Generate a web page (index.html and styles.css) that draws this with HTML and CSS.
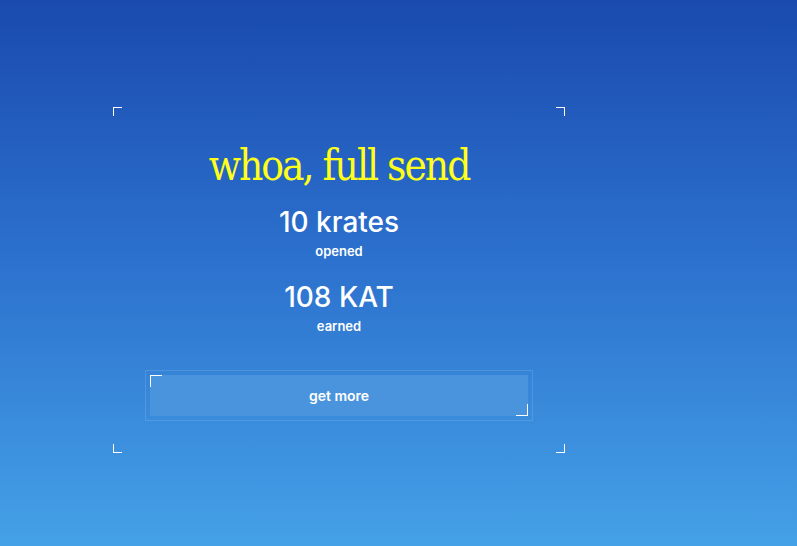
FILE: index.html
```html
<!DOCTYPE html>
<html lang="en">
<head>
  <meta charset="UTF-8">
  <meta name="viewport" content="width=device-width, initial-scale=1.0">
  <title>Krates opened</title>
  <link rel="stylesheet" href="styles.css">
</head>
<body>
  <div class="page">
    <div class="card">
      <span class="corner tl"></span>
      <span class="corner tr"></span>
      <span class="corner bl"></span>
      <span class="corner br"></span>

      <h1 class="title">whoa, full send</h1>

      <div class="stat">
        <div class="stat-value">10 krates</div>
        <div class="stat-label">opened</div>
      </div>
      <div class="stat">
        <div class="stat-value">108 KAT</div>
        <div class="stat-label">earned</div>
      </div>

      <div class="btn-frame">
        <button class="btn">
          <span class="btn-corner tl"></span>
          <span class="btn-corner br"></span>
          get more
        </button>
      </div>
    </div>
  </div>
</body>
</html>
```

FILE: styles.css
```css
html, body {
  margin: 0;
  padding: 0;
  height: 100%;
}

body {
  font-family: Inter, "Noto Sans", sans-serif;
  background: linear-gradient(to bottom, #1a4aae 0%, #2d73cf 50%, #45a1e7 100%);
  color: #fff;
}

.page {
  padding: 107px 0 0 113px;
}

.card {
  position: relative;
  width: 452px;
  height: 346px;
  box-sizing: border-box;
  padding: 31px 32px 0;
  display: flex;
  flex-direction: column;
  align-items: center;
}

.corner {
  position: absolute;
  width: 8px;
  height: 8px;
  border-color: #fff;
  border-style: solid;
  border-width: 0;
}

.corner.tl { top: 0; left: 0; border-top-width: 1px; border-left-width: 1px; }
.corner.tr { top: 0; right: 0; border-top-width: 1px; border-right-width: 1px; }
.corner.bl { bottom: 0; left: 0; border-bottom-width: 1px; border-left-width: 1px; }
.corner.br { bottom: 0; right: 0; border-bottom-width: 1px; border-right-width: 1px; }

.title {
  margin: 0;
  font-family: "DejaVu Serif", serif;
  font-stretch: condensed;
  font-weight: normal;
  font-size: 42px;
  line-height: 56px;
  color: #ffff1a;
  letter-spacing: -2px;
}

.stat {
  display: flex;
  flex-direction: column;
  align-items: center;
  margin-top: 11px;
}

.stat + .stat {
  margin-top: 19px;
}

.stat-value {
  font-size: 28px;
  font-weight: 500;
  line-height: 34px;
}

.stat-label {
  margin-top: 2px;
  font-size: 13px;
  font-weight: 600;
  line-height: 20px;
}

.btn-frame {
  margin-top: 34px;
  width: 388px;
  box-sizing: border-box;
  padding: 4px;
  border: 1px solid rgba(255, 255, 255, 0.12);
}

.btn {
  position: relative;
  display: block;
  width: 100%;
  height: 41px;
  border: 0;
  background-color: #4a93dd;
  color: #fff;
  font-family: Inter, "Noto Sans", sans-serif;
  font-size: 14px;
  font-weight: 600;
  cursor: pointer;
}

.btn-corner {
  position: absolute;
  width: 11px;
  height: 11px;
  border: 0 solid #fff;
}

.btn-corner.tl { top: 0; left: 0; border-top-width: 1px; border-left-width: 1px; }
.btn-corner.br { bottom: 0; right: 0; border-bottom-width: 1px; border-right-width: 1px; }
```
